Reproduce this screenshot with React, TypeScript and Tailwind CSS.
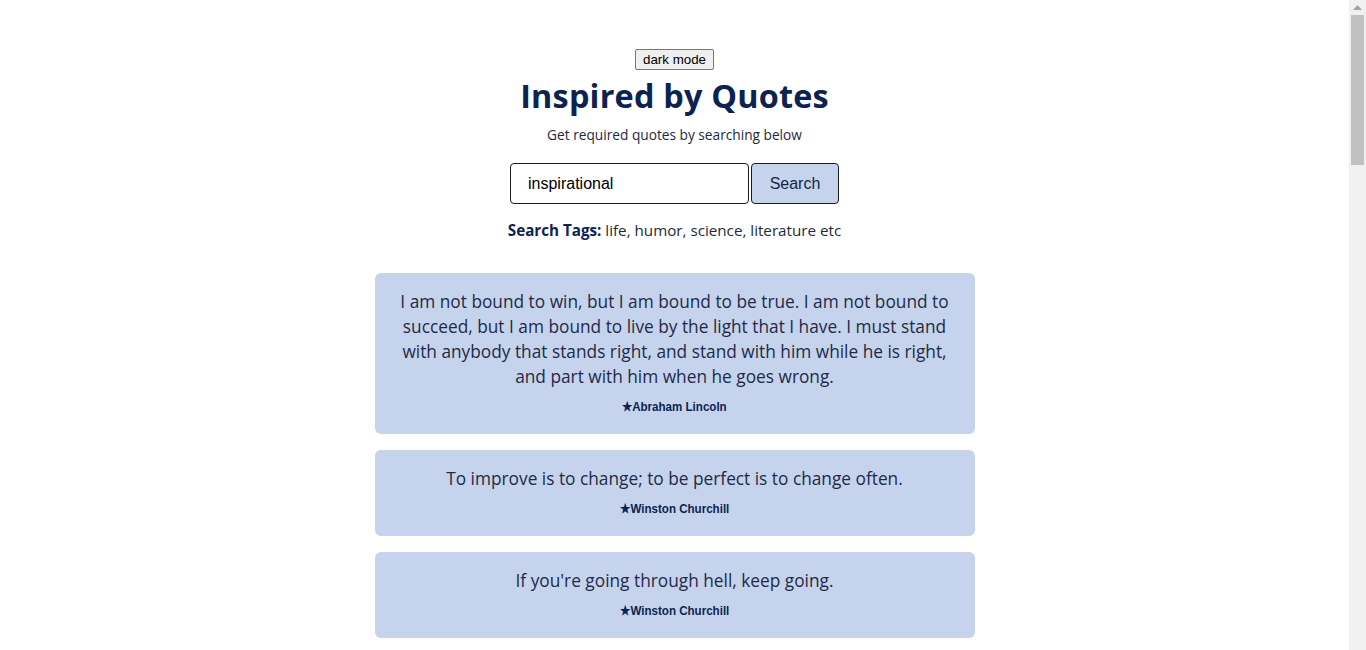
import React from "react";

const quotes: { text: string; author: string }[] = [
  {
    text: "I am not bound to win, but I am bound to be true. I am not bound to succeed, but I am bound to live by the light that I have. I must stand with anybody that stands right, and stand with him while he is right, and part with him when he goes wrong.",
    author: "Abraham Lincoln",
  },
  { text: "To improve is to change; to be perfect is to change often.", author: "Winston Churchill" },
  { text: "If you're going through hell, keep going.", author: "Winston Churchill" },
];

const sans = "font-['Open_Sans','Noto_Sans',sans-serif]";

function Scrollbar() {
  return (
    <div className="w-[17px] h-full bg-[#f1f1f1] flex flex-col items-center shrink-0">
      <div className="h-[15px] w-full flex items-center justify-center">
        <svg width="9" height="5" viewBox="0 0 9 5">
          <path d="M4.5 0 L9 5 L0 5 Z" fill="#a3a3a3" />
        </svg>
      </div>
      <div className="w-[13px] h-[150px] bg-[#c1c1c1]" />
    </div>
  );
}

export default function App() {
  return (
    <div className="h-screen flex overflow-hidden bg-white">
      <div className={`flex-1 flex flex-col items-center pt-[49px] ${sans}`}>
        <button className="h-[21px] px-[7px] bg-[#efefef] border border-[#767676] rounded-[2px] text-[13.33px] leading-[15px] text-black font-['Liberation_Sans',Arial,sans-serif]">
          dark mode
        </button>
        <h1 className="mt-[1px] text-[32.4px] leading-[48px] font-bold text-[#0c2352] tracking-[0.2px]">
          Inspired by Quotes
        </h1>
        <p className="mt-[6px] text-[13.7px] leading-[20px] text-[#1d2940]">
          Get required quotes by searching below
        </p>
        <form className="mt-[18px] flex gap-[2px]" onSubmit={(e) => e.preventDefault()}>
          <input
            defaultValue="inspirational"
            className="w-[239px] h-[41px] border border-[#1a1a1a] rounded-[4px] pl-[17px] text-[16px] text-black outline-none font-['Liberation_Sans',Arial,sans-serif]"
          />
          <button className="w-[88px] h-[41px] border border-[#1a1a1a] rounded-[4px] bg-[#c5d4ec] text-[16px] text-[#14244a] font-['Liberation_Sans',Arial,sans-serif]">
            Search
          </button>
        </form>
        <p className="mt-[15px] text-[15.2px] leading-[22px] text-[#1d2940]">
          <span className="font-bold text-[#0c2352]">Search Tags:</span> life, humor, science, literature etc
        </p>
        <div className="mt-[32px] w-[600px] flex flex-col gap-4">
          {quotes.map((q, i) => (
            <div key={i} className="bg-[#c5d4ec] rounded-[6px] pt-4 pb-[20px] px-[22px] text-center">
              <p className="text-[17.3px] leading-[25px] text-[#1f2a48]">{q.text}</p>
              <p className="mt-[11px] h-[14px] flex justify-center">
                <span className="inline-block scale-x-[0.89] text-[13px] leading-[14px] font-bold text-[#0c2352] font-['Liberation_Sans',Arial,sans-serif] whitespace-nowrap">
                  ★{q.author}
                </span>
              </p>
            </div>
          ))}
        </div>
      </div>
      <Scrollbar />
    </div>
  );
}
